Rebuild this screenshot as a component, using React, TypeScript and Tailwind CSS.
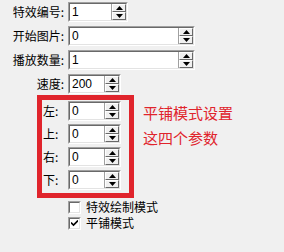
import { ReactNode } from "react";

const cjk = "font-['Noto_Sans_CJK_SC','Noto_Sans',sans-serif]";

function Arrow({ up }: { up?: boolean }) {
  return (
    <svg width="7" height="4" viewBox="0 0 7 4" className="block">
      {up ? <path d="M3.5 0 L7 4 L0 4 Z" fill="#000" /> : <path d="M0 0 L7 0 L3.5 4 Z" fill="#000" />}
    </svg>
  );
}

function SpinBox({ value, width }: { value: string; width: string }) {
  return (
    <div className={`${width} h-[20px] border border-t-[#a0a0a0] border-l-[#a0a0a0] border-b-white border-r-white`}>
      <div className="flex h-full border border-t-[#696969] border-l-[#696969] border-b-[#e3e3e3] border-r-[#e3e3e3] bg-white">
        <span className="flex-1 pl-[2px] font-['Liberation_Sans',Arial,sans-serif] text-[12px] leading-[16px] text-black">
          {value}
        </span>
        <div className="flex w-[15px] flex-col border-l border-l-[#a0a0a0]">
          <div className="flex flex-1 items-center justify-center border border-t-white border-l-white border-b-[#696969] border-r-[#696969] bg-[#f0f0f0]">
            <Arrow up />
          </div>
          <div className="flex flex-1 items-center justify-center border border-t-white border-l-white border-b-[#696969] border-r-[#696969] bg-[#f0f0f0]">
            <Arrow />
          </div>
        </div>
      </div>
    </div>
  );
}

function Row({ label, children, labelClass }: { label: string; children: ReactNode; labelClass: string }) {
  return (
    <div className="flex h-[20px] items-center">
      <span className={`${labelClass} ${cjk} text-[12px] leading-[20px] text-black whitespace-nowrap`}>{label}</span>
      {children}
    </div>
  );
}

function CheckBox({ checked, label }: { checked?: boolean; label: string }) {
  return (
    <div className="flex h-[16px] items-center pl-[68px]">
      <div className="flex h-[13px] w-[13px] items-center justify-center border border-t-[#a0a0a0] border-l-[#a0a0a0] border-b-white border-r-white">
        <div className="flex h-full w-full items-center justify-center border border-t-[#696969] border-l-[#696969] border-b-[#e3e3e3] border-r-[#e3e3e3] bg-white">
          {checked && (
            <svg width="7" height="7" viewBox="0 0 7 7" className="block">
              <path d="M0 2.5 L2.5 5 L7 0.5" stroke="#000" strokeWidth="1.6" fill="none" />
            </svg>
          )}
        </div>
      </div>
      <span className={`ml-[5px] ${cjk} text-[12px] leading-[16px] text-black`}>{label}</span>
    </div>
  );
}

export default function App() {
  return (
    <div className="h-[252px] w-[284px] overflow-hidden bg-[#f0f0f0] pt-[2px]">
      <div className="flex flex-col gap-[4px]">
        <Row label="特效编号:" labelClass="w-[68px] pr-[4px] text-right">
          <SpinBox value="1" width="w-[60px]" />
        </Row>
        <Row label="开始图片:" labelClass="w-[68px] pr-[4px] text-right">
          <SpinBox value="0" width="w-[127px]" />
        </Row>
        <Row label="播放数量:" labelClass="w-[68px] pr-[4px] text-right">
          <SpinBox value="1" width="w-[127px]" />
        </Row>
        <Row label="速度:" labelClass="w-[68px] pr-[4px] text-right">
          <SpinBox value="200" width="w-[53px]" />
        </Row>
      </div>

      <div className="mt-[1px] flex">
        <div className="ml-[37px] flex h-[103px] w-[97px] flex-col gap-[3px] border-[5px] border-[#e0242c] pt-[1px] pl-[1px]">
          <Row label="左:" labelClass="w-[25px]">
            <SpinBox value="0" width="w-[53px]" />
          </Row>
          <Row label="上:" labelClass="w-[25px]">
            <SpinBox value="0" width="w-[53px]" />
          </Row>
          <Row label="右:" labelClass="w-[25px]">
            <SpinBox value="0" width="w-[53px]" />
          </Row>
          <Row label="下:" labelClass="w-[25px]">
            <SpinBox value="0" width="w-[53px]" />
          </Row>
        </div>
        <div className={`ml-[9px] pt-[5px] ${cjk} text-[15px] leading-[25px] text-[#e0242c]`}>
          <div>平铺模式设置</div>
          <div>这四个参数</div>
        </div>
      </div>

      <div className="mt-[1px] flex flex-col">
        <CheckBox label="特效绘制模式" />
        <CheckBox checked label="平铺模式" />
      </div>
    </div>
  );
}
